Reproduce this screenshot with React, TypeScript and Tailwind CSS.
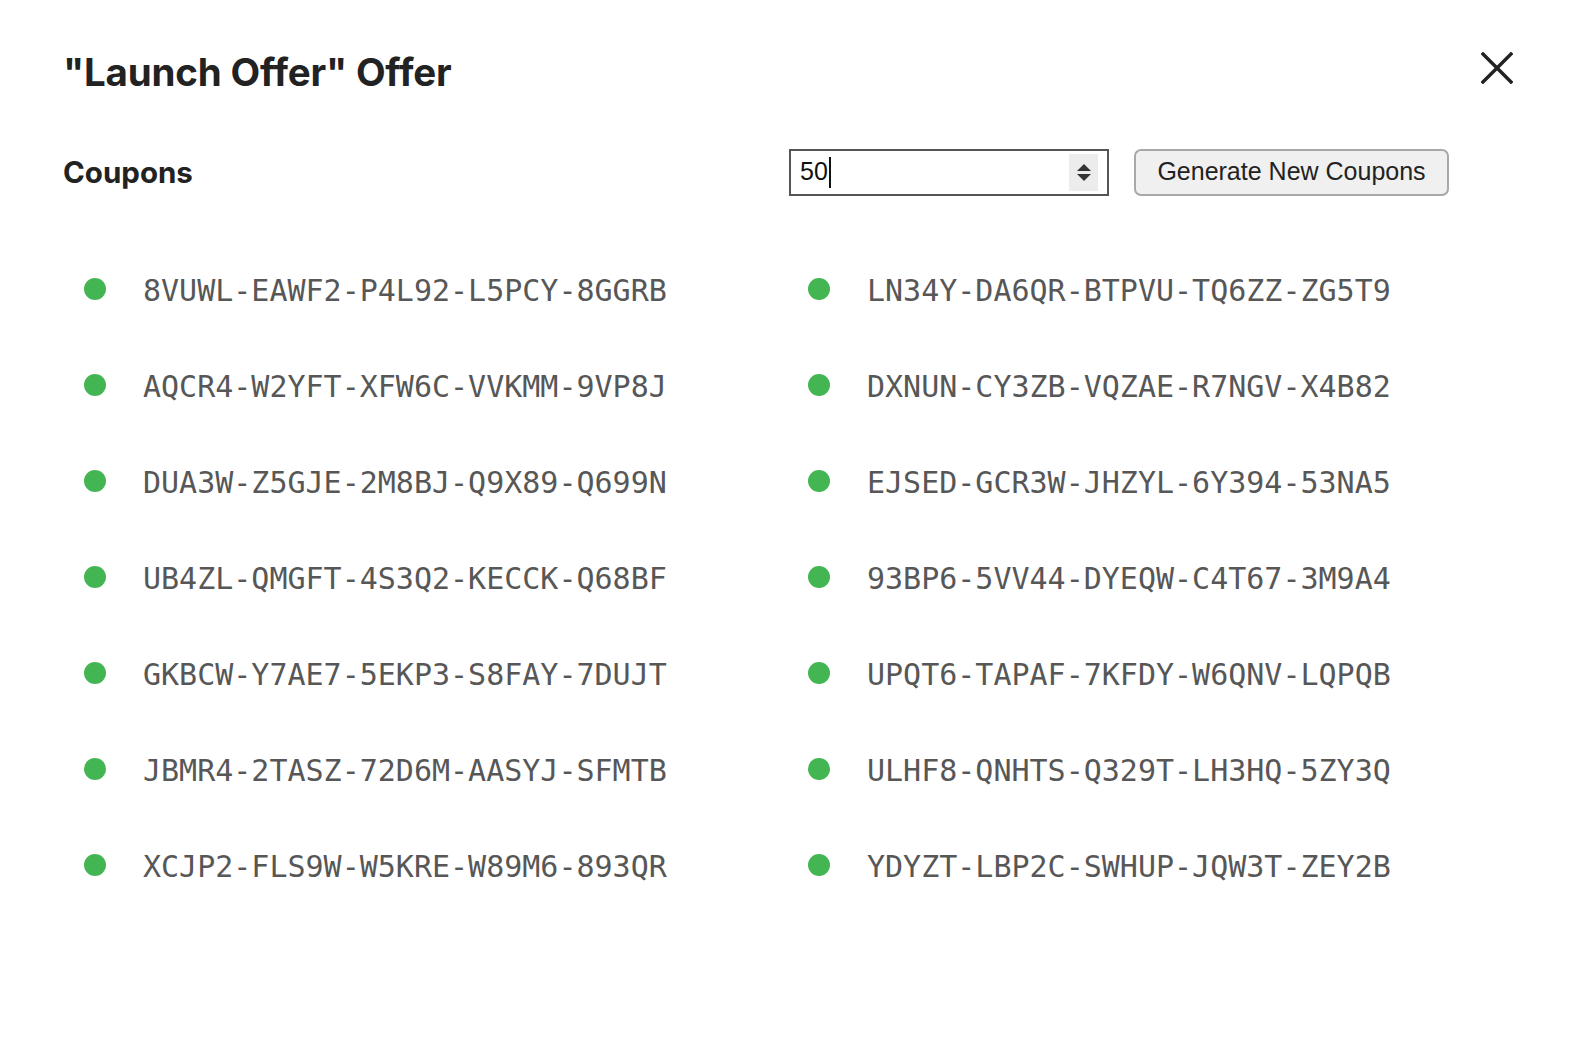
const left = [
  '8VUWL-EAWF2-P4L92-L5PCY-8GGRB',
  'AQCR4-W2YFT-XFW6C-VVKMM-9VP8J',
  'DUA3W-Z5GJE-2M8BJ-Q9X89-Q699N',
  'UB4ZL-QMGFT-4S3Q2-KECCK-Q68BF',
  'GKBCW-Y7AE7-5EKP3-S8FAY-7DUJT',
  'JBMR4-2TASZ-72D6M-AASYJ-SFMTB',
  'XCJP2-FLS9W-W5KRE-W89M6-893QR',
];

const right = [
  'LN34Y-DA6QR-BTPVU-TQ6ZZ-ZG5T9',
  'DXNUN-CY3ZB-VQZAE-R7NGV-X4B82',
  'EJSED-GCR3W-JHZYL-6Y394-53NA5',
  '93BP6-5VV44-DYEQW-C4T67-3M9A4',
  'UPQT6-TAPAF-7KFDY-W6QNV-LQPQB',
  'ULHF8-QNHTS-Q329T-LH3HQ-5ZY3Q',
  'YDYZT-LBP2C-SWHUP-JQW3T-ZEY2B',
];

// interleave so the grid fills row by row
const coupons = left.flatMap((code, i) => [code, right[i]]);

function CloseIcon() {
  return (
    <svg width="32" height="32" viewBox="0 0 32 32" fill="none" stroke="#222" strokeWidth="3.4" strokeLinecap="square">
      <line x1="2" y1="2" x2="30" y2="30" />
      <line x1="30" y1="2" x2="2" y2="30" />
    </svg>
  );
}

export default function App() {
  return (
    <div className="min-h-[1054px] w-[1570px] bg-white text-[#222] font-['Inter',sans-serif]">
      <div className="pl-[63px] pr-[58px] pt-[46px]">
        {/* Header */}
        <div className="flex items-start justify-between">
          <h1 className="text-[38.5px] font-bold leading-[52px] tracking-[-0.2px]">"Launch Offer" Offer</h1>
          <button className="-mr-[1px] mt-[6px]">
            <CloseIcon />
          </button>
        </div>

        {/* Coupons toolbar */}
        <div className="mt-[50px] flex items-center">
          <h2 className="w-[726px] text-[29.5px] font-bold leading-[48px]">Coupons</h2>
          <div className="relative flex h-[47px] w-[320px] items-center border-2 border-[#555] bg-white pl-[9px] font-['Liberation_Sans',sans-serif] text-[25px] text-[#111]">
            <span>50</span>
            <span className="ml-[1px] h-[31px] w-[2px] bg-[#111]" />
            <div className="absolute right-[9px] top-[3px] flex h-[37px] w-[29px] flex-col items-center justify-center gap-[3px] bg-[#ececec]">
              <span className="h-0 w-0 border-x-[7px] border-b-[7px] border-x-transparent border-b-[#333]" />
              <span className="h-0 w-0 border-x-[7px] border-t-[7px] border-x-transparent border-t-[#333]" />
            </div>
          </div>
          <button className="ml-[25px] h-[47px] w-[315px] rounded-[7px] border-2 border-[#a8a8a8] bg-[#f0f0f0] font-['Liberation_Sans',sans-serif] text-[25px] text-[#222]">
            Generate New Coupons
          </button>
        </div>

        {/* Coupon list */}
        <ul className="ml-[21px] mt-[72px] grid w-[1446px] grid-cols-[724px_1fr] gap-y-[50px]">
          {coupons.map((code) => (
            <li key={code} className="flex h-[46px] items-center gap-[37px]">
              <span className="mb-[4px] h-[22px] w-[22px] shrink-0 rounded-full bg-[#43b653]" />
              <span className="font-['DejaVu_Sans_Mono',monospace] text-[30px] leading-none text-[#575757]">{code}</span>
            </li>
          ))}
        </ul>
      </div>
    </div>
  );
}
